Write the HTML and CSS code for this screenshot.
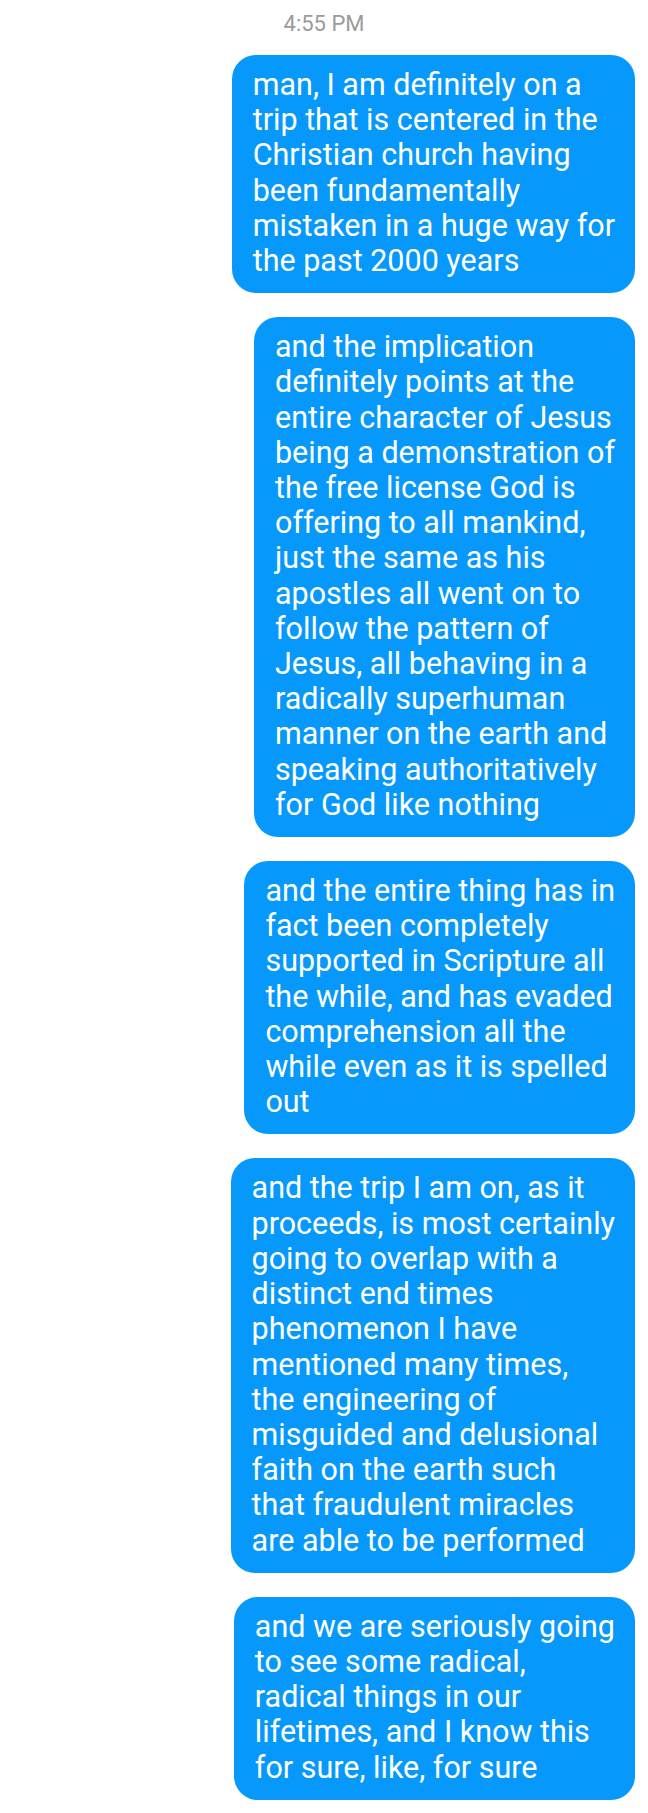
FILE: index.html
```html
<!DOCTYPE html>
<html lang="en">
<head>
<meta charset="utf-8">
<title>Messages</title>
<link rel="stylesheet" href="styles.css">
</head>
<body>
<main class="thread">
  <div class="timestamp">4:55 PM</div>
  <div class="bubble">man, I am definitely on a<br>trip that is centered in the<br>Christian church having<br>been fundamentally<br>mistaken in a huge way for<br>the past 2000 years</div>
  <div class="bubble">and the implication<br>definitely points at the<br>entire character of Jesus<br>being a demonstration of<br>the free license God is<br>offering to all mankind,<br>just the same as his<br>apostles all went on to<br>follow the pattern of<br>Jesus, all behaving in a<br>radically superhuman<br>manner on the earth and<br>speaking authoritatively<br>for God like nothing</div>
  <div class="bubble">and the entire thing has in<br>fact been completely<br>supported in Scripture all<br>the while, and has evaded<br>comprehension all the<br>while even as it is spelled<br>out</div>
  <div class="bubble">and the trip I am on, as it<br>proceeds, is most certainly<br>going to overlap with a<br>distinct end times<br>phenomenon I have<br>mentioned many times,<br>the engineering of<br>misguided and delusional<br>faith on the earth such<br>that fraudulent miracles<br>are able to be performed</div>
  <div class="bubble">and we are seriously going<br>to see some radical,<br>radical things in our<br>lifetimes, and I know this<br>for sure, like, for sure</div>
</main>
</body>
</html>
```
FILE: styles.css
```css
html, body {
  margin: 0;
  padding: 0;
  background: #ffffff;
}

.thread {
  display: flex;
  flex-direction: column;
  align-items: flex-end;
  gap: 24px;
  padding: 11px 13px 12px 13px;
  font-family: Roboto, "Liberation Sans", sans-serif;
}

.timestamp {
  align-self: center;
  font-size: 22px;
  line-height: 26px;
  color: #9b9b9b;
  margin-bottom: -6px;
}

.bubble {
  background: #0699fb;
  color: #ffffff;
  font-size: 30.5px;
  line-height: 35.2px;
  padding: 12px 20px 15px 21px;
  border-radius: 24px;
  white-space: nowrap;
}
```
